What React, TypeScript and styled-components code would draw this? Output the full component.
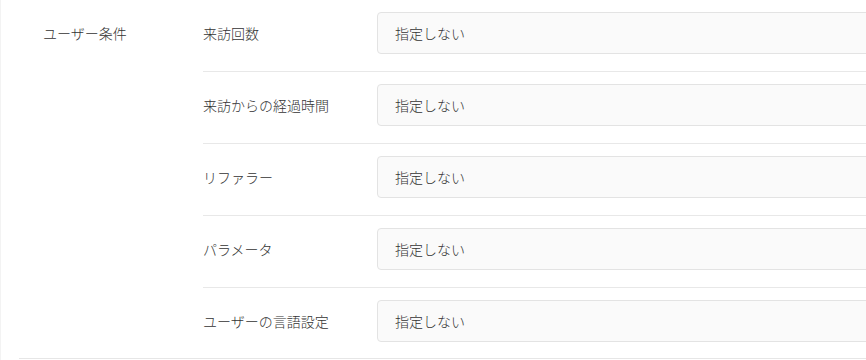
import React from "react";
import styled, { createGlobalStyle } from "styled-components";

const Global = createGlobalStyle`
  html, body {
    margin: 0;
    padding: 0;
    background: #ffffff;
    overflow: hidden;
  }
  body {
    font-family: "Noto Sans CJK JP", "Noto Sans", sans-serif;
    color: #333333;
    -webkit-font-smoothing: antialiased;
  }
`;

const Page = styled.div`
  width: 866px;
  height: 360px;
  border-left: 1px solid #f3f3f3;
  box-sizing: border-box;
  overflow: hidden;
`;

const Group = styled.section`
  margin-left: 18px;
  width: 1100px;
  display: grid;
  grid-template-columns: 184px 1fr;
  border-bottom: 1px solid #e6e6e6;
`;

const GroupLabel = styled.div`
  padding: 23px 0 0 24px;
  font-size: 14px;
  font-weight: 300;
  line-height: 20px;
  color: #333333;
`;

const Rows = styled.div`
  display: flex;
  flex-direction: column;
`;

const Row = styled.div<{ $last?: boolean }>`
  display: grid;
  grid-template-columns: 174px 1fr;
  align-items: center;
  padding: 12px 0 ${(p) => (p.$last ? "16px" : "17px")};
  border-bottom: ${(p) => (p.$last ? "none" : "1px solid #e8e8e8")};
`;

const RowLabel = styled.div`
  font-size: 14px;
  font-weight: 300;
  line-height: 20px;
  color: #333333;
`;

const SelectBox = styled.div`
  height: 42px;
  box-sizing: border-box;
  border: 1px solid #e3e3e3;
  border-radius: 4px;
  background: #fafafa;
  display: flex;
  align-items: center;
  padding-left: 17px;
  font-size: 14px;
  font-weight: 300;
  color: #333333;
`;

const rows = [
  "来訪回数",
  "来訪からの経過時間",
  "リファラー",
  "パラメータ",
  "ユーザーの言語設定",
];

export default function App() {
  return (
    <>
      <Global />
      <Page>
        <Group>
          <GroupLabel>ユーザー条件</GroupLabel>
          <Rows>
            {rows.map((label, i) => (
              <Row key={label} $last={i === rows.length - 1}>
                <RowLabel>{label}</RowLabel>
                <SelectBox>指定しない</SelectBox>
              </Row>
            ))}
          </Rows>
        </Group>
      </Page>
    </>
  );
}
